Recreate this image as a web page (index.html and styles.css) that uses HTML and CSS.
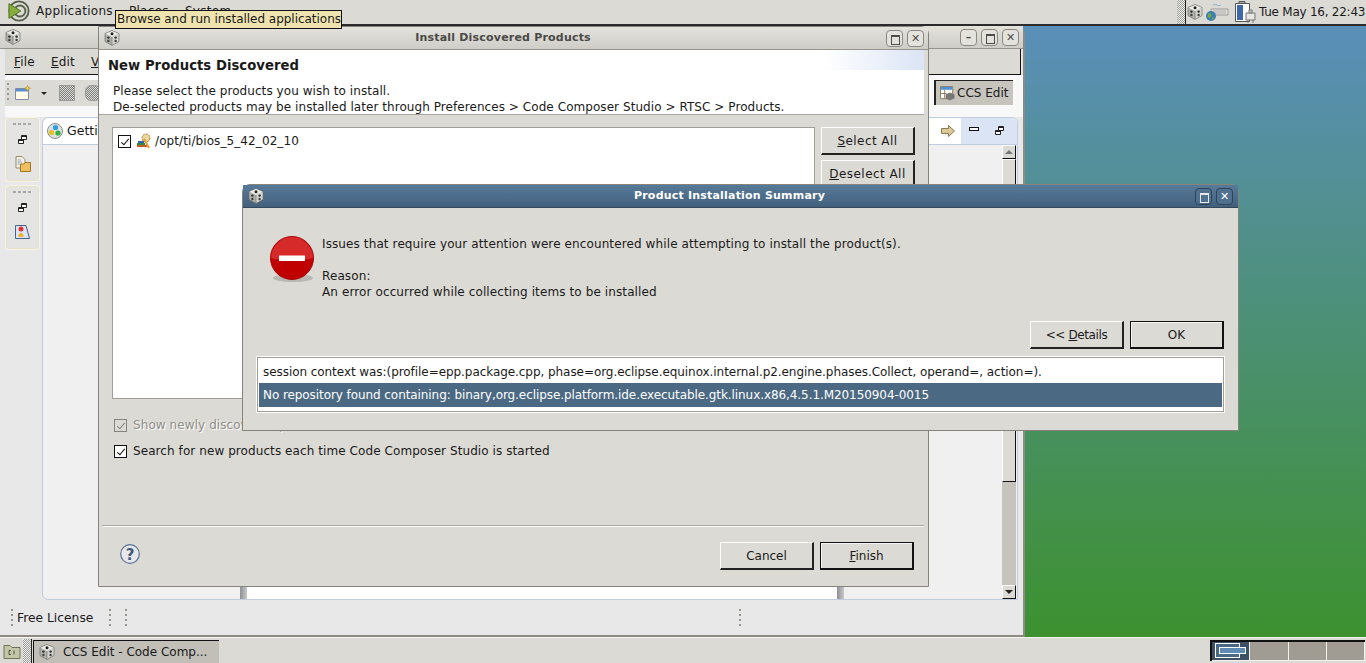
FILE: index.html
```html
<!DOCTYPE html>
<html lang="en">
<head>
<meta charset="utf-8">
<title>Install Discovered Products</title>
<link rel="stylesheet" href="styles.css">
</head>
<body>
<svg class="defs" width="0" height="0">
  <defs>
    <symbol id="cube" viewBox="0 0 16 16">
      <path d="M8 .5 15 3.500V11.500L8 15.500 1 11.500V3.500Z" fill="#b0b0ac" stroke="#6e6e6a" stroke-width=".7"/>
      <path d="M8 1 14.500 3.700 8 7 1.500 3.700Z" fill="#ecece8"/>
      <path d="M8 7 14.500 3.700V11.200L8 15Z" fill="#d2d2ce"/>
      <path d="M8 7V15" stroke="#7a7a76" stroke-width=".7"/>
      <circle cx="8" cy="3.800" r="1.500" fill="#222"/>
      <circle cx="4.400" cy="7.600" r="1.200" fill="#2c2c2c"/>
      <circle cx="4.400" cy="11" r="1.200" fill="#444"/>
      <circle cx="11.600" cy="7.600" r="1.200" fill="#2c2c2c"/>
      <circle cx="11.600" cy="11" r="1.200" fill="#444"/>
    </symbol>
    <symbol id="restore" viewBox="0 0 9 9">
      <path d="M3.5 .5H8.5V4.5H3.5ZM.5 4.5H5.5V8.5H.5Z" fill="#fff" stroke="#222"/>
      <path d="M3.5 1.5H8.5M.5 5.5H5.5" stroke="#222"/>
    </symbol>
  </defs>
</svg>

<header class="top-panel">
  <div class="menus">
    <svg class="logo" viewBox="0 0 24 24" width="22" height="22">
      <circle cx="12" cy="12" r="10.500" fill="#dcdad5" stroke="#55604a" stroke-width="2"/>
      <circle cx="13" cy="12" r="6" fill="none" stroke="#55604a" stroke-width="2"/>
      <path d="M1 4 14 12 1 20Z" fill="#86ad3e" stroke="#4d6b1f"/>
    </svg>
    <span class="menu-item apps">Applications</span>
    <span class="menu-item places">Places</span>
    <span class="menu-item">System</span>
  </div>
  <div class="tray">
    <span class="handle"></span>
    <svg class="tray-cube" width="16" height="16"><use href="#cube"/></svg>
    <svg class="tray-net" viewBox="0 0 24 20" width="24" height="20">
      <path d="M8 3c3-2 5 2 8 0" fill="none" stroke="#8fb0d0"/>
      <path d="M6 7H23V13H6Z" fill="#e4e4df" stroke="#999"/>
      <path d="M8 9H21M8 11H21" stroke="#aaa"/>
      <circle cx="6" cy="14" r="5" fill="#3d7fb0"/>
      <path d="M3 12c2-2 4 0 3 2s-2 3-3 1ZM7 15l2 1-2 2Z" fill="#7aaa35"/>
    </svg>
    <svg class="tray-bat" viewBox="0 0 22 24" width="22" height="24">
      <path d="M1.500 3.500H15.500V21.500H1.500Z" fill="#fff" stroke="#555"/>
      <path d="M5 1.500H11V3.500H5Z" fill="#aaa" stroke="#555"/>
      <path d="M3 5H9V20H3Z" fill="#3f68a8"/>
      <path d="M12 13H21V20H12Z" fill="#e6e6e3" stroke="#777"/>
      <path d="M15 10H18V13H15ZM14 20V23M19 20V23" stroke="#777" fill="#ccc"/>
    </svg>
    <span class="clock">Tue May 16, 22:43</span>
  </div>
</header>
<div class="tooltip">Browse and run installed applications</div>

<main class="desktop">
  <section class="window main-window">
    <div class="titlebar">
      <svg class="wm-icon" width="16" height="16"><use href="#cube"/></svg>
      <span class="title"></span>
      <span class="wm-btn">&#x2013;</span><span class="wm-btn wm-box"></span><span class="wm-btn">&#x2715;</span>
    </div>
    <nav class="menubar">
      <span><u>F</u>ile</span><span><u>E</u>dit</span><span><u>V</u>iew</span>
    </nav>
    <div class="toolbar">
      <div class="toolbar-left">
        <span class="grip"></span>
        <svg viewBox="0 0 16 16" width="16" height="16">
          <path d="M.5 3.500H13.500V14.500H.5Z" fill="#fffbe6" stroke="#7e8ea8"/>
          <path d="M1 4H13V6.500H1Z" fill="#5b8fd0"/>
          <path d="M12.500 .5l1 2 2 .8-2 .8-1 2-1-2-2-.8 2-.8Z" fill="#f0d060" stroke="#a88a20" stroke-width=".6"/>
        </svg>
        <span class="caret"></span>
        <span class="tool-dis"></span>
        <span class="tool-dis tool-round"></span>
      </div>
      <div class="perspective">
        <svg viewBox="0 0 16 16" width="15" height="15">
          <path d="M.5 .5H13.500V13.500H.5Z" fill="#fff" stroke="#8a7a55"/>
          <path d="M1 1H13V4H1Z" fill="#4d8fd8"/>
          <path d="M5 4V13M1 8H7" stroke="#8a7a55"/>
          <path d="M6 9l4.500-2 5 2-5 2.500ZM6 9V13L10.500 15.500 15.500 13V9L10.500 11.500Z" fill="#777"/>
        </svg>
        <span>CCS Edit</span>
      </div>
    </div>
    <div class="workbench">
      <aside class="trim">
        <div class="trim-group">
          <span class="dots"></span>
          <svg width="9" height="9"><use href="#restore"/></svg>
          <svg viewBox="0 0 16 16" width="16" height="16">
            <path d="M1 .5H7L10 3.500V12H1Z" fill="#f5f2e8" stroke="#998a66"/>
            <path d="M2.500 4H6M2.500 6H7M2.500 8H5" stroke="#8fa0c0"/>
            <path d="M5.500 8H9L10 6.500H15.500V15.500H5.500Z" fill="#f0c060" stroke="#a0762a"/>
          </svg>
        </div>
        <div class="trim-group">
          <span class="dots"></span>
          <svg width="9" height="9"><use href="#restore"/></svg>
          <svg viewBox="0 0 16 16" width="16" height="16">
            <path d="M.5 1.500H11L14.500 14.500H.5Z" fill="#dbe6f5" stroke="#46618c"/>
            <circle cx="6" cy="5" r="2.500" fill="#e03030"/>
            <path d="M3.500 13V10.500L6 8.500 8.500 10.500V13Z" fill="#f0b030"/>
          </svg>
        </div>
      </aside>
      <div class="editor">
        <div class="tabs">
          <div class="tab">
            <svg viewBox="0 0 16 16" width="16" height="16">
              <circle cx="8" cy="8" r="7.500" fill="#dde0e0" stroke="#88908f"/>
              <circle cx="8.500" cy="4.500" r="2.600" fill="#2b9fe0"/>
              <circle cx="4.500" cy="9.500" r="2.600" fill="#e8c020"/>
              <circle cx="11" cy="10" r="2.600" fill="#30b040"/>
            </svg>
            <span>Getting Started</span>
          </div>
          <div class="tab-fill">
            <svg class="nav-arrow" viewBox="0 0 14 12" width="14" height="12">
              <path d="M.5 3.500H7.500V.5L13.500 6 7.500 11.500V8.500H.5Z" fill="#d8c89a" stroke="#8a7a50"/>
            </svg>
          </div>
          <div class="tab-ctrls">
            <span class="min-ctl"></span>
            <svg width="9" height="9"><use href="#restore"/></svg>
          </div>
        </div>
        <div class="editor-body">
          <div class="page"><span class="sash"></span><span class="sash"></span></div>
          <div class="vscroll">
            <span class="sb-btn sb-up"></span>
            <span class="sb-thumb"></span>
            <span class="sb-trough"></span>
            <span class="sb-btn sb-down"></span>
          </div>
        </div>
      </div>
    </div>
    <footer class="statusbar">
      <span class="sep"></span><span class="status-text">Free License</span><span class="sep"></span><span class="sep sep-b"></span><span class="sep sep-c"></span>
    </footer>
  </section>

  <section class="window install-dialog">
    <div class="titlebar">
      <svg class="wm-icon" width="16" height="16"><use href="#cube"/></svg>
      <span class="title">Install Discovered Products</span>
      <span class="wm-btn wm-box"></span><span class="wm-btn">&#x2715;</span>
    </div>
    <div class="wizard-head">
      <h1>New Products Discovered</h1>
      <p>Please select the products you wish to install.<br>De-selected products may be installed later through Preferences &gt; Code Composer Studio &gt; RTSC &gt; Products.</p>
    </div>
    <div class="wizard-body">
      <div class="product-row">
        <div class="product-list">
          <div class="product">
            <span class="check"></span>
            <svg viewBox="0 0 16 16" width="16" height="16">
              <circle cx="10" cy="5" r="4" fill="#e8d8a0" stroke="#a8803a" stroke-dasharray="2 1"/>
              <path d="M1 10H9V12H1Z" fill="#2a8a50"/>
              <path d="M1 12H11V14H1Z" fill="#c85a20"/>
              <path d="M2 8H8V10H2Z" fill="#3a60b0"/>
              <path d="M8 6l5 9" stroke="#e0a030" stroke-width="2"/>
            </svg>
            <span class="product-name">/opt/ti/bios_5_42_02_10</span>
          </div>
        </div>
        <div class="side-btns">
          <button class="btn btn-wide"><u>S</u>elect All</button>
          <button class="btn btn-wide"><u>D</u>eselect All</button>
        </div>
      </div>
      <label class="opt opt-dis"><span class="check"></span>Show newly discovered products</label>
      <label class="opt"><span class="check"></span>Search for new products each time Code Composer Studio is started</label>
    </div>
    <div class="wizard-foot">
      <svg class="help" viewBox="0 0 20 20" width="20" height="20">
        <circle cx="10" cy="10" r="9.300" fill="#e8e8ea" stroke="#5d7299" stroke-width="1.200"/>
        <text x="10" y="15.500" text-anchor="middle" class="help-q">?</text>
      </svg>
      <button class="btn">Cancel</button>
      <button class="btn btn-default"><u>F</u>inish</button>
    </div>
  </section>

  <section class="window summary-dialog">
    <div class="titlebar titlebar-active">
      <svg class="wm-icon" width="16" height="16"><use href="#cube"/></svg>
      <span class="title">Product Installation Summary</span>
      <span class="wm-btn wm-box"></span><span class="wm-btn">&#x2715;</span>
    </div>
    <div class="summary-msg">
      <svg class="stop" viewBox="0 0 46 48" width="46" height="48">
        <ellipse cx="23" cy="42" rx="20" ry="4" fill="#b9b7b2"/>
        <circle cx="22" cy="22" r="21.500" fill="#c00000" stroke="#a80808"/>
        <path d="M1 22A21 21 0 0 1 43 22C34 25 10 25 1 22Z" fill="#d62a2a"/>
        <path d="M9 19.500H35V25H9Z" fill="#fff"/>
      </svg>
      <p>Issues that require your attention were encountered while attempting to install the product(s).<br><br>Reason:<br>An error occurred while collecting items to be installed</p>
    </div>
    <div class="summary-btns">
      <button class="btn btn-tight">&lt;&lt; <u>D</u>etails</button>
      <button class="btn btn-default">OK</button>
    </div>
    <div class="details">
      <div class="detail-row">session context was:(profile=epp.package.cpp, phase=org.eclipse.equinox.internal.p2.engine.phases.Collect, operand=, action=).</div>
      <div class="detail-row detail-sel">No repository found containing: binary,org.eclipse.platform.ide.executable.gtk.linux.x86,4.5.1.M20150904-0015</div>
    </div>
  </section>
</main>

<footer class="bottom-panel">
  <svg class="show-desk" viewBox="0 0 18 18" width="18" height="18">
    <path d="M1 3.500H7L9 5.500H17V16.500H1Z" fill="#c4c6a8" stroke="#70725a"/>
    <path d="M6 8.500H8M6 8.500V12.500M6 12.500H8M11 8.500V12.500" stroke="#50523e" fill="none"/>
  </svg>
  <span class="handle handle-b"></span>
  <div class="task">
    <svg width="16" height="16"><use href="#cube"/></svg>
    <span>CCS Edit - Code Comp...</span>
  </div>
  <div class="pager">
    <div class="ws ws-on"><span class="pw pw-a"></span><span class="pw pw-b"></span></div>
    <div class="ws"></div><div class="ws"></div><div class="ws"></div>
  </div>
</footer>
</body>
</html>
```
FILE: styles.css
```css
* { box-sizing: border-box; }
html, body { margin: 0; height: 100%; overflow: hidden; }
body {
  font: 12px/16px "DejaVu Sans", sans-serif;
  color: #1a1a1a;
  background: #dcdad5;
  width: 1366px;
  height: 663px;
  position: relative;
  display: flex;
  flex-direction: column;
}
.defs { position: absolute; }
button { font: inherit; color: inherit; }

.top-panel {
  height: 26px;
  flex: none;
  background: #dcdad5;
  border-bottom: 2px solid #2b2b2b;
  display: flex;
  justify-content: space-between;
}
.menus { display: flex; align-items: center; padding: 0 0 2px 8px; }
.logo { margin-right: 6px; }
.menu-item { margin-right: 16px; letter-spacing: .3px; }
.tray { display: flex; align-items: center; }
.handle {
  width: 9px;
  height: 24px;
  flex: none;
  background: repeating-conic-gradient(#9a9a96 0 25%, #f0f0f0 0 50%) 0 0 / 2px 2px;
  border-right: 1px solid #222;
}
.tray-cube { margin: 0 2px 0 1px; }
.tray-net { margin-right: 5px; }
.tray-bat { margin-right: 3px; }
.clock { margin-right: 3px; width: 104px; white-space: nowrap; letter-spacing: -.25px; }

.tooltip {
  position: absolute;
  left: 115px;
  top: 10px;
  width: 227px;
  height: 19px;
  background: #efe4b0;
  border: 1px solid #111;
  padding-left: 1px;
  line-height: 17px;
  letter-spacing: -.03px;
  white-space: nowrap;
  z-index: 5;
}

.desktop {
  flex: 1;
  position: relative;
  background: linear-gradient(#5a8fb9, #3d912f);
}
.bottom-panel {
  height: 26px;
  flex: none;
  background: #dcdad5;
  border-top: 1px solid #f6f6f4;
  display: flex;
  align-items: center;
  position: relative;
}

.window {
  position: absolute;
  background: #dcdad5;
  display: flex;
  flex-direction: column;
}
.titlebar {
  height: 23px;
  flex: none;
  display: flex;
  align-items: center;
  gap: 4px;
  padding: 0 4px 0 5px;
  background: linear-gradient(#e4e2dd, #cfcdc7);
  border-bottom: 1px solid #96948c;
}
.titlebar-active {
  background: linear-gradient(#577a99, #42607c);
  border-bottom: 1px solid #33485c;
  padding-right: 5px;
}
.title {
  flex: 1;
  text-align: center;
  font-weight: bold;
  font-size: 11px;
  letter-spacing: .2px;
  color: #4a4a46;
}
.titlebar-active .title { color: #fff; }
.wm-btn {
  width: 17px;
  height: 17px;
  flex: none;
  border: 1px solid #8a8880;
  border-radius: 4px;
  background: #e4e2dd;
  color: #4d4d4a;
  font-size: 11px;
  font-weight: bold;
  line-height: 15px;
  text-align: center;
}
.wm-box { position: relative; }
.wm-box::after {
  content: "";
  position: absolute;
  left: 4px; top: 4px;
  width: 7px; height: 7px;
  border: 1px solid #4d4d4a;
  border-top-width: 2px;
}
.titlebar-active .wm-btn { background: #4f708e; border-color: #2d4356; color: #fff; }
.titlebar-active .wm-box::after { border-color: #e8e8e8; }

.main-window {
  left: 0;
  top: 0;
  width: 1025px;
  height: 611px;
  border-right: 2px solid #8d8b84;
  border-bottom: 2px solid #8d8b84;
  border-top-right-radius: 8px;
  background: #e8e8e8;
}
.menubar {
  height: 26px;
  margin: 0 2px 0 5px;
  padding: 5px 0 0 9px;
  background: #dcdad5;
  border-right: 1px solid #111;
  border-bottom: 1px solid #111;
  display: flex;
  gap: 16px;
  letter-spacing: .2px;
  flex: none;
}
.toolbar {
  height: 42px;
  flex: none;
  margin-left: 5px;
  padding: 5px 10px 0 0;
  background: #f8f8f8;
  display: flex;
  justify-content: space-between;
}
.toolbar-left { display: flex; align-items: center; height: 26px; width: 800px; gap: 6px; padding-left: 2px; background: #dcdad5; }
.grip { width: 2px; height: 20px; background: repeating-linear-gradient(#999 0 2px, transparent 2px 5px); }
.caret { width: 0; height: 0; border: 3px solid transparent; border-top: 3px solid #222; margin: 3px 6px 0 4px; }
.tool-dis {
  width: 16px; height: 16px;
  background: repeating-conic-gradient(#80807e 0 25%, #d8d8d6 0 50%) 0 0 / 2px 2px;
  border: 1px solid #9a9a98;
}
.tool-round { border-radius: 6px; margin-left: 4px; }
.perspective {
  width: 79px;
  height: 25px;
  display: flex;
  align-items: center;
  gap: 2px;
  padding-left: 4px;
  background: #c6c4bd;
  border-left: 2px solid #222;
  border-top: 1px solid #222;
  white-space: nowrap;
}

.workbench { flex: 1; display: flex; padding-left: 5px; padding-right: 5px; min-height: 0; }
.trim { width: 35px; flex: none; display: flex; flex-direction: column; gap: 3px; }
.trim-group {
  height: 65px;
  border: 1px solid #f6f4ea;
  border-radius: 4px;
  box-shadow: inset 0 0 0 1px #e6e2ca;
  background: #e4e4e2;
  display: flex;
  flex-direction: column;
  align-items: center;
  gap: 12px;
  padding-top: 5px;
}
.dots { width: 20px; height: 2px; background: repeating-linear-gradient(90deg, #a8a8a4 0 3px, transparent 3px 5px); margin-bottom: -2px; }
.editor {
  flex: 1;
  margin-left: 2px;
  margin-bottom: 3px;
  border: 1px solid #c3cbe0;
  border-radius: 6px 6px 0 6px;
  background: #f0f0f0;
  display: flex;
  flex-direction: column;
  min-width: 0;
}
.tabs { height: 27px; flex: none; display: flex; background: #fff; border-bottom: 1px solid #c3cbe0; border-radius: 6px 6px 0 0; overflow: hidden; }
.tab { width: 200px; display: flex; align-items: center; gap: 4px; padding-left: 4px; white-space: nowrap; font-size: 12.5px; }
.tab-fill { flex: 1; display: flex; align-items: center; justify-content: flex-end; padding-right: 6px; }
.tab-ctrls { width: 56px; background: #dbe4f5; display: flex; align-items: flex-start; gap: 16px; padding: 8px 0 0 8px; }
.min-ctl { width: 10px; height: 4px; border: 1px solid #111; background: #fff; margin-top: 1px; }
.editor-body { flex: 1; display: flex; justify-content: flex-end; min-height: 0; }
.page { width: 604px; margin-right: 158px; height: 100%; background: #fff; display: flex; justify-content: space-between; }
.sash { width: 7px; background: linear-gradient(90deg, #8c9095, #c8c8c8); }
.vscroll { width: 14px; margin-right: 1px; display: flex; flex-direction: column; }
.sb-btn { height: 14px; flex: none; background: #dcdad5; border: 1px solid #fff; border-right-color: #111; border-bottom-color: #111; position: relative; }
.sb-btn::after { content: ""; position: absolute; left: 2px; border: 4px solid transparent; }
.sb-up::after { top: 0; border-bottom: 4px solid #777; }
.sb-down::after { top: 4px; border-top: 4px solid #222; }
.sb-thumb { height: 323px; flex: none; background: #dcdad5; border: 1px solid #fff; border-right-color: #111; border-bottom-color: #111; }
.sb-trough { flex: 1; background: #c6c4bd; }
.statusbar { height: 32px; flex: none; padding: 0 0 2px 11px; display: flex; align-items: center; }
.sep { width: 2px; height: 18px; background: repeating-linear-gradient(#98968a 0 2px, transparent 2px 5px); }
.status-text { width: 96px; padding-left: 4px; white-space: nowrap; font-size: 12.300px; }
.sep-b { margin-left: 14px; }
.sep-c { margin-left: 612px; }

.install-dialog {
  left: 98px;
  top: 0;
  width: 831px;
  height: 561px;
  border: 1px solid #85837a;
  border-top-right-radius: 8px;
}
.wizard-head {
  height: 65px;
  flex: none;
  background: #fff;
  margin-right: 4px;
  padding: 8px 0 0 9px;
  position: relative;
  border-bottom: 1px solid #a8a69e;
}
.wizard-head::before {
  content: "";
  position: absolute;
  right: 0; top: 0;
  width: 100px;
  height: 20px;
  background: linear-gradient(90deg, rgba(219,228,245,0), #dbe4f5);
}
.wizard-head h1 { margin: 0; font-size: 13.200px; line-height: 16px; font-weight: bold; letter-spacing: .04px; }
.wizard-head p { margin: 9px 0 0 5px; line-height: 16px; position: relative; letter-spacing: .06px; }
.wizard-body { flex: 1; padding: 12px 9px 0 10px; border-bottom: 1px solid #a8a69e; box-shadow: 0 1px 0 #fff; margin: 0 4px 0 3px; }
.product-row { display: flex; gap: 6px; height: 272px; }
.product-list { width: 703px; background: #fff; border: 1px solid #a09e96; padding: 5px 5px; }
.product { display: flex; align-items: center; gap: 3px; }
.product .check { margin: 0 2px 0 0; }
.product-name { letter-spacing: .09px; }
.check {
  width: 13px;
  height: 13px;
  margin: 0 6px 0 2px;
  border: 1px solid #111;
  background: #fff;
  flex: none;
  position: relative;
}
.check::after {
  content: "";
  position: absolute;
  left: 4px; top: 1px;
  width: 3px; height: 7px;
  border: solid #111;
  border-width: 0 1.500px 1.500px 0;
  transform: rotate(40deg);
}
.side-btns { display: flex; flex-direction: column; gap: 5px; }
.btn {
  width: 94px;
  height: 28px;
  padding: 0;
  background: #dcdad5;
  border: 1px solid #fff;
  border-right: 2px solid #222;
  border-bottom: 2px solid #222;
}
.btn-wide { letter-spacing: .45px; }
.btn-tight { letter-spacing: -.4px; }
.btn-default { border: 1px solid #111; border-right-width: 2px; border-bottom-width: 2px; box-shadow: inset 1px 1px 0 #f6f6f4; }
.opt { display: flex; align-items: center; height: 16px; letter-spacing: .08px; }
.opt-dis { margin-top: 18px; margin-bottom: 10px; color: #8f8e88; text-shadow: 1px 1px 0 #fff; }
.opt-dis .check { border-color: #84837d; background: #dcdad5; }
.opt-dis .check::after { border-color: #84837d; }
.wizard-foot { flex: none; height: 60px; display: flex; align-items: flex-start; gap: 6px; padding: 16px 14px 0 21px; }
.help { margin: 2px auto 0 0; }
.help-q { font: bold 15px "DejaVu Sans", sans-serif; fill: #44587f; }

.summary-dialog {
  left: 242px;
  top: 158px;
  width: 997px;
  height: 247px;
  border: 1px solid #85837a;
  border-radius: 8px 8px 0 0;
}
.summary-msg { display: flex; padding: 28px 0 0 27px; height: 113px; flex: none; }
.stop { margin-right: 6px; flex: none; }
.summary-msg p { margin: 0; letter-spacing: .11px; }
.summary-btns { display: flex; justify-content: flex-end; gap: 6px; padding-right: 14px; }
.details { margin: 8px 14px 0; height: 55px; background: #fff; border: 1px solid #a09e96; padding: 2px 1px 1px; outline: 1px solid #fff; }
.detail-row { height: 24px; line-height: 24px; padding-left: 4px; white-space: nowrap; letter-spacing: -.06px; }
.detail-row:first-child { height: 23px; }
.detail-sel { background: #4b6983; color: #fff; letter-spacing: -.075px; }

.show-desk { margin-left: 3px; }
.handle-b { margin-left: 2px; }
.task {
  margin: 1px 0 0 1px;
  width: 186px;
  height: 23px;
  display: flex;
  align-items: center;
  gap: 8px;
  padding-left: 5px;
  background: #c1bfb8;
  border-left: 1px solid #111;
  border-top: 1px solid #111;
  white-space: nowrap;
}
.pager {
  position: absolute;
  left: 1210px;
  top: 2px;
  width: 155px;
  height: 21px;
  display: flex;
  gap: 1px;
  border-top: 2px solid #111;
  border-left: 2px solid #111;
  padding: 0 1px 1px 0;
  background: #f2f2f0;
}
.ws { flex: 1; background: #a09c94; position: relative; }
.ws-on { background: #3c5066; }
.pw { position: absolute; border: 1px solid #fff; }
.pw-a { left: 3px; top: 1px; width: 25px; height: 15px; background: #4b6983; }
.pw-b { left: 7px; top: 5px; width: 27px; height: 7px; background: #5f8ab3; }
```
